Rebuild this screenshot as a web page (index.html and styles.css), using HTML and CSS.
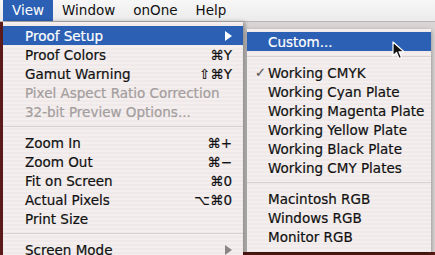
FILE: index.html
```html
<!DOCTYPE html>
<html lang="en">
<head>
  <meta charset="UTF-8" />
  <meta name="viewport" content="width=device-width, initial-scale=1.0"/>
  <title>View Menu</title>
  <link rel="stylesheet" href="styles.css">
</head>
<body>
  <div class="menubar">
    <span class="bar-item open">View</span>
    <span class="bar-item">Window</span>
    <span class="bar-item">onOne</span>
    <span class="bar-item">Help</span>
  </div>

  <div class="stage">
    <ul class="menu main-menu">
      <li class="active">Proof Setup <i class="arrow"></i></li>
      <li>Proof Colors <span class="key">⌘Y</span></li>
      <li>Gamut Warning <span class="key">⇧⌘Y</span></li>
      <li class="off">Pixel Aspect Ratio Correction</li>
      <li class="off">32-bit Preview Options...</li>
      <li class="sep"></li>
      <li>Zoom In <span class="key">⌘+</span></li>
      <li>Zoom Out <span class="key">⌘−</span></li>
      <li>Fit on Screen <span class="key">⌘0</span></li>
      <li>Actual Pixels <span class="key">⌥⌘0</span></li>
      <li>Print Size</li>
      <li class="sep"></li>
      <li>Screen Mode <i class="arrow grey"></i></li>
    </ul>

    <ul class="menu sub-menu">
      <li class="active">Custom...</li>
      <li class="sep"></li>
      <li><span class="tick">✓</span>Working CMYK</li>
      <li>Working Cyan Plate</li>
      <li>Working Magenta Plate</li>
      <li>Working Yellow Plate</li>
      <li>Working Black Plate</li>
      <li>Working CMY Plates</li>
      <li class="sep"></li>
      <li>Macintosh RGB</li>
      <li>Windows RGB</li>
      <li>Monitor RGB</li>
    </ul>

    <!-- mouse pointer sitting on "Custom..." -->
    <svg class="cursor" width="14" height="20" viewBox="0 0 14 20">
      <path d="M1 1 L1 15 L4.5 11.5 L7 17.5 L9.5 16.5 L7 10.8 L12 10.8 Z" fill="#111" stroke="#fff" stroke-width="1.2" stroke-linejoin="round"/>
    </svg>
  </div>
</body>
</html>
```

FILE: styles.css
```css
* {
  box-sizing: border-box;
}

body {
  margin: 0;
  width: 435px;
  height: 255px;
  overflow: hidden;
  font-family: "DejaVu Sans", "Liberation Sans", sans-serif;
  font-size: 13.5px;
  color: #111;
  background: #5a1c16;
}

.menubar {
  display: flex;
  height: 22px;
  padding-left: 3px;
  background: linear-gradient(#f7f7f7, #ebebeb);
  border-bottom: 1px solid #b9b6b6;
}

.bar-item {
  padding: 0 9px;
  line-height: 21px;
  color: #111;
}

.bar-item.open {
  background: #2c60b4;
  color: #fff;
}

.stage {
  position: relative;
  display: flex;
  align-items: flex-start;
  height: 233px;
  background:
    linear-gradient(to right, #5e1b1b 3px, transparent 3px),
    linear-gradient(#d9d5d5 230px, #5a1c16 230px);
}

.menu {
  list-style: none;
  margin: 0;
  background: repeating-linear-gradient(#f4eeee 0 2px, #efe9e9 2px 4px);
}

.menu li {
  display: flex;
  align-items: center;
  height: 19px;
  white-space: nowrap;
  -webkit-text-stroke: 0.2px currentColor;
}

.menu li.sep {
  height: 12px;
  background: linear-gradient(transparent 5px, #d8d2d2 5px, #d8d2d2 6px, transparent 6px);
}

.menu li.active {
  background: #2c60b4;
  color: #fff;
}

.menu li.off {
  color: #a39d9d;
}

.main-menu {
  width: 240px;
  margin-left: 3px;
  padding: 4px 0 0;
  height: 240px;
  box-shadow: 2px 0 4px rgba(0, 0, 0, 0.35);
}

.main-menu li {
  padding: 0 11px 0 22px;
}

.key {
  margin-left: auto;
}

.arrow {
  margin-left: auto;
  width: 0;
  height: 0;
  border-left: 7px solid #fff;
  border-top: 5px solid transparent;
  border-bottom: 5px solid transparent;
}

.arrow.grey {
  border-left-color: #8a8686;
}

.sub-menu {
  width: 184px;
  margin-top: 7px;
  margin-left: 4px;
  padding: 3px 0 6px;
  box-shadow: 0 2px 5px rgba(0, 0, 0, 0.4);
}

.sub-menu li {
  padding-left: 21px;
  position: relative;
}

.tick {
  position: absolute;
  left: 8px;
  color: #555;
  font-size: 13px;
}

.cursor {
  position: absolute;
  left: 392px;
  top: 19px;
}
```
